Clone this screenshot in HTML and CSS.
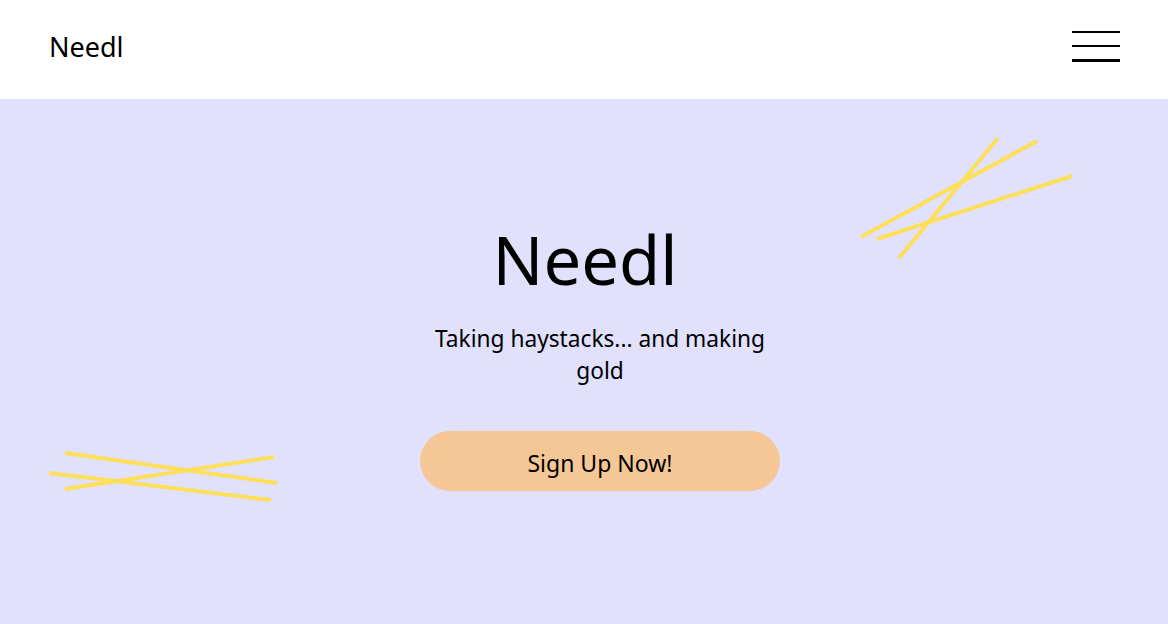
FILE: index.html
```html
<!DOCTYPE html>
<html lang="en">
<head>
<meta charset="utf-8">
<title>Needl</title>
<link rel="stylesheet" href="styles.css">
</head>
<body>
<header class="topbar">
  <div class="brand">Needl</div>
  <button class="menu" aria-label="Menu">
    <span></span><span></span><span></span>
  </button>
</header>
<main class="hero">
  <svg class="straws straws-tr" width="240" height="140" viewBox="840 125 240 140" aria-hidden="true">
    <g stroke="#fddf5a" stroke-width="4" stroke-linecap="butt">
      <line x1="861" y1="237" x2="1037" y2="141"/>
      <line x1="877" y1="239" x2="1072" y2="176"/>
      <line x1="899" y1="258" x2="998" y2="138"/>
    </g>
  </svg>
  <svg class="straws straws-bl" width="250" height="70" viewBox="40 445 250 70" aria-hidden="true">
    <g stroke="#fddf5a" stroke-width="4" stroke-linecap="butt">
      <line x1="65" y1="453" x2="277" y2="483"/>
      <line x1="49" y1="473" x2="271" y2="500"/>
      <line x1="65" y1="489" x2="274" y2="457"/>
    </g>
  </svg>
  <h1 class="title">Needl</h1>
  <p class="tagline">Taking haystacks... and making gold</p>
  <a class="cta" href="#">Sign Up Now!</a>
</main>
</body>
</html>
```

FILE: styles.css
```css
* { box-sizing: border-box; }
html, body { margin: 0; padding: 0; }
body {
  font-family: "Noto Sans", "Open Sans", sans-serif;
  color: #000;
  background: #e1e0fd;
  height: 624px;
  overflow: hidden;
}
.topbar {
  height: 99px;
  background: #fff;
  display: flex;
  align-items: center;
  justify-content: space-between;
  padding: 0 48px 0 49px;
}
.brand {
  font-size: 27px;
  line-height: 1;
  margin-top: -6px;
}
.menu {
  width: 48px;
  height: 31px;
  padding: 0;
  border: 0;
  background: transparent;
  display: flex;
  flex-direction: column;
  justify-content: space-between;
  margin-top: -7px;
}
.menu span {
  display: block;
  height: 2.5px;
  background: #000;
}
.hero {
  position: relative;
  height: 525px;
  background: #e1e0fd;
  display: flex;
  flex-direction: column;
  align-items: center;
  padding: 120px 0 0 32px;
}
.straws {
  position: absolute;
  pointer-events: none;
}
.straws-tr { left: 840px; top: 26px; }
.straws-bl { left: 40px; top: 346px; }
.title {
  margin: 0 30px 0 0;
  font-weight: 400;
  font-size: 67px;
  line-height: 80px;
  letter-spacing: 0;
}
.tagline {
  margin: 24px 0 0;
  width: 350px;
  text-align: center;
  font-size: 22.7px;
  line-height: 32px;
}
.cta {
  margin-top: 44px;
  width: 360px;
  height: 60px;
  border-radius: 30px;
  background: #f5c796;
  color: #000;
  text-decoration: none;
  font-size: 23px;
  padding-top: 3px;
  display: flex;
  align-items: center;
  justify-content: center;
}
```
